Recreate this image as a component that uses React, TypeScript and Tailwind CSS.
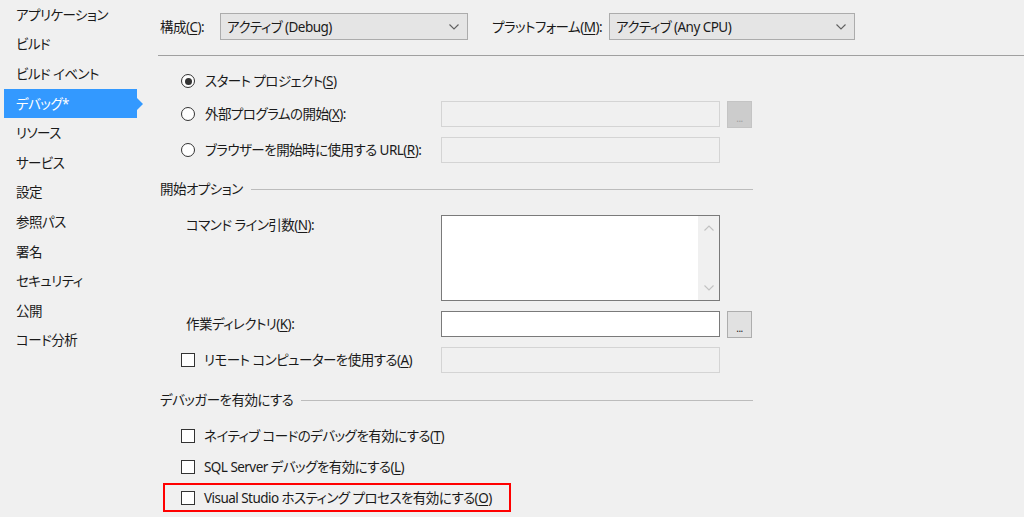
import type { ReactNode } from "react";

const menu = [
    "アプリケーション",
    "ビルド",
    "ビルド イベント",
    "デバッグ*",
    "リソース",
    "サービス",
    "設定",
    "参照パス",
    "署名",
    "セキュリティ",
    "公開",
    "コード分析",
];

const Key = ({ k }: { k: string }) => (
    <>
        (<span className="underline underline-offset-2">{k}</span>)
    </>
);

const Chevron = ({ up = false, color = "#606060" }: { up?: boolean; color?: string }) => (
    <svg width="10" height="6" viewBox="0 0 10 6" fill="none">
        <path
            d={up ? "M0.5 5.5 L5 1 L9.5 5.5" : "M0.5 0.5 L5 5 L9.5 0.5"}
            stroke={color}
            strokeWidth="1.1"
        />
    </svg>
);

const Select = ({ value, width }: { value: string; width: string }) => (
    <div
        className={`flex h-[27px] ${width} shrink-0 items-center justify-between border border-[#acacac] bg-[#e5e5e5] pr-[8px] pl-[6px]`}
    >
        <span>{value}</span>
        <Chevron />
    </div>
);

const Radio = ({ checked = false }: { checked?: boolean }) => (
    <div className="flex h-[14px] w-[14px] shrink-0 items-center justify-center rounded-full border border-[#333333] bg-white">
        {checked && <div className="h-[7px] w-[7px] rounded-full bg-[#333333]" />}
    </div>
);

const Check = () => <div className="h-[14px] w-[14px] shrink-0 border border-[#333333] bg-white" />;

const Browse = ({ disabled = false }: { disabled?: boolean }) => (
    <div
        className={
            disabled
                ? "ml-[7px] flex h-[27px] w-[25px] items-end justify-center border border-[#c4c4c4] bg-[#cccccc] pb-[4px] text-[10px] leading-none text-[#a0a0a0]"
                : "ml-[7px] flex h-[27px] w-[25px] items-end justify-center border border-[#adadad] bg-[#e1e1e1] pb-[4px] text-[10px] leading-none text-[#1a1a1a]"
        }
    >
        ...
    </div>
);

const Section = ({ title }: { title: string }) => (
    <div className="flex h-[20px] w-[595px] items-center pl-[2px]">
        <span>{title}</span>
        <div className="ml-[8px] h-px flex-1 bg-[#bcbcbc]" />
    </div>
);

const Row = ({ className, left, children }: { className: string; left: ReactNode; children?: ReactNode }) => (
    <div className={`flex ${className}`}>
        <div className="flex w-[283px] shrink-0">{left}</div>
        {children}
    </div>
);

const App = () => {
    return (
        <div className="flex h-[517px] w-[1024px] overflow-hidden bg-[#f0f0f0] font-['Noto_Sans','Noto_Sans_CJK_JP',sans-serif] text-[13.5px] leading-[20px] tracking-[-0.04em] whitespace-nowrap text-[#1a1a1a] [font-feature-settings:'palt']">
            {/* side menu */}
            <div className="flex w-[158px] shrink-0 flex-col">
                {menu.map((item, i) =>
                    i === 3 ? (
                        <div key={item} className="flex h-[29.6px] items-center pl-[4px]">
                            <div className="flex h-[29px] w-[133px] items-center bg-[#3399ff] pl-[12px] text-white">
                                {item}
                            </div>
                            <div className="h-0 w-0 border-y-[6px] border-l-[6px] border-y-transparent border-l-[#3399ff]" />
                        </div>
                    ) : (
                        <div key={item} className="flex h-[29.6px] items-center pl-[16px]">
                            {item}
                        </div>
                    )
                )}
            </div>

            {/* content */}
            <div className="flex flex-1 flex-col">
                <div className="mt-[13px] flex h-[27px] items-center">
                    <div className="w-[62px] shrink-0 pl-[2px]">
                        構成<Key k="C" />:
                    </div>
                    <Select value="アクティブ (Debug)" width="w-[248px]" />
                    <div className="ml-[24px] w-[117px] shrink-0">
                        プラットフォーム<Key k="M" />:
                    </div>
                    <Select value="アクティブ (Any CPU)" width="w-[246px]" />
                </div>
                <div className="mt-[15px] h-px bg-[#a0a0a0]" />

                <div className="mt-[12px] flex h-[26px] items-center pl-[23px]">
                    <Radio checked />
                    <span className="ml-[10px]">
                        スタート プロジェクト<Key k="S" />
                    </span>
                </div>
                <Row
                    className="mt-[7px] h-[26px] items-center"
                    left={
                        <div className="flex items-center pl-[23px]">
                            <Radio />
                            <span className="ml-[10px]">
                                外部プログラムの開始<Key k="X" />:
                            </span>
                        </div>
                    }
                >
                    <div className="h-[26px] w-[279px] border border-[#d4d4d4] bg-[#f0f0f0]" />
                    <Browse disabled />
                </Row>
                <Row
                    className="mt-[10px] h-[26px] items-center"
                    left={
                        <div className="flex items-center pl-[23px]">
                            <Radio />
                            <span className="ml-[10px]">
                                ブラウザーを開始時に使用する URL<Key k="R" />:
                            </span>
                        </div>
                    }
                >
                    <div className="h-[26px] w-[279px] border border-[#d4d4d4] bg-[#f0f0f0]" />
                </Row>

                <div className="mt-[16px]">
                    <Section title="開始オプション" />
                </div>

                <Row
                    className="mt-[16px] h-[86px] items-start"
                    left={
                        <div className="pl-[28px]">
                            コマンド ライン引数<Key k="N" />:
                        </div>
                    }
                >
                    <div className="flex h-[86px] w-[279px] border border-[#7a7a7a] bg-white">
                        <div className="flex-1" />
                        <div className="flex w-[21px] flex-col items-center justify-between bg-[#f0f0f0] pt-[9px] pb-[9px]">
                            <Chevron up color="#c2c2c2" />
                            <Chevron color="#c2c2c2" />
                        </div>
                    </div>
                </Row>

                <Row
                    className="mt-[10px] h-[26px] items-start"
                    left={
                        <div className="flex h-[26px] items-center pl-[28px]">
                            作業ディレクトリ<Key k="K" />:
                        </div>
                    }
                >
                    <div className="h-[26px] w-[279px] border border-[#7a7a7a] bg-white" />
                    <Browse />
                </Row>

                <Row
                    className="mt-[10px] h-[26px] items-center"
                    left={
                        <div className="flex items-center pl-[23px]">
                            <Check />
                            <span className="ml-[9px]">
                                リモート コンピューターを使用する<Key k="A" />
                            </span>
                        </div>
                    }
                >
                    <div className="h-[26px] w-[279px] border border-[#d4d4d4] bg-[#f0f0f0]" />
                </Row>

                <div className="mt-[17px]">
                    <Section title="デバッガーを有効にする" />
                </div>

                <div className="mt-[14px] flex h-[24px] items-center pl-[23px]">
                    <Check />
                    <span className="ml-[9px]">
                        ネイティブ コードのデバッグを有効にする<Key k="T" />
                    </span>
                </div>
                <div className="mt-[7px] flex h-[24px] items-center pl-[23px]">
                    <Check />
                    <span className="ml-[9px]">
                        SQL Server デバッグを有効にする<Key k="L" />
                    </span>
                </div>
                <div className="mt-[4px] ml-[5px] flex h-[29px] w-[348px] items-center border-2 border-[#ff0000] pl-[16px]">
                    <Check />
                    <span className="ml-[9px]">
                        Visual Studio ホスティング プロセスを有効にする<Key k="O" />
                    </span>
                </div>
            </div>
        </div>
    );
};

export default App;
